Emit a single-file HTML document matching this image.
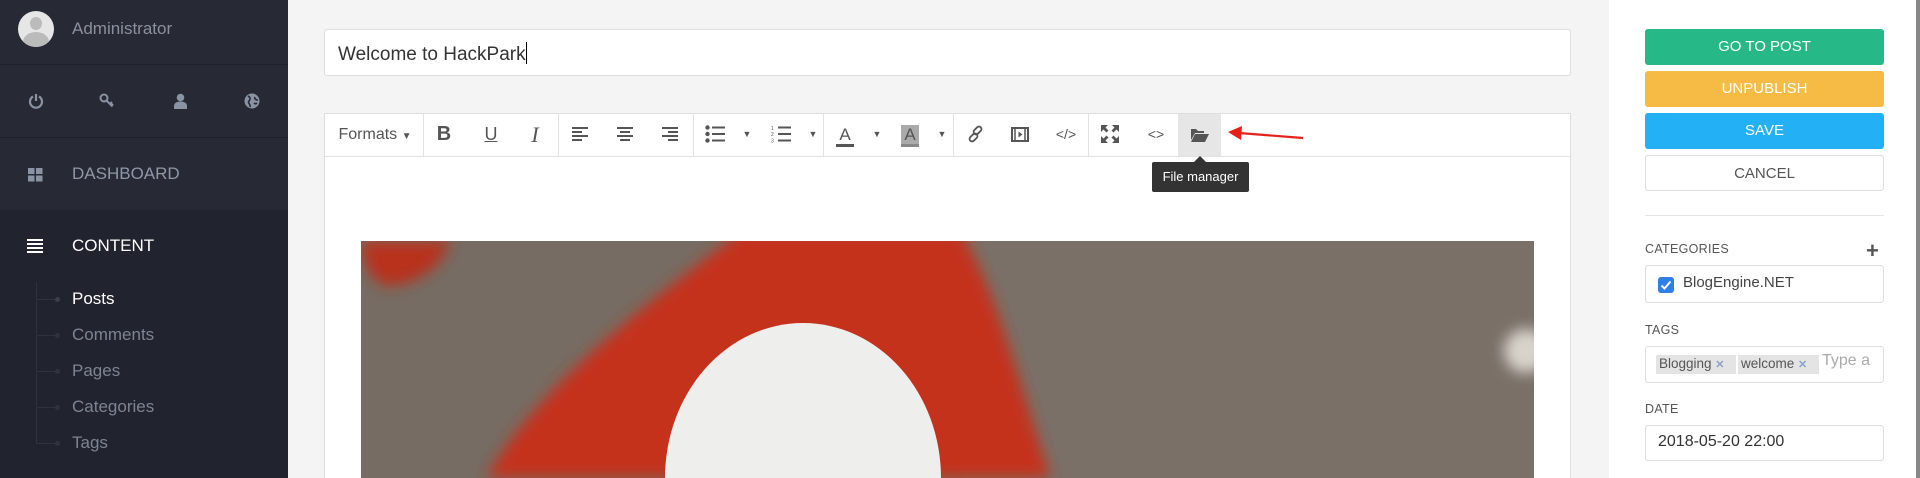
<!DOCTYPE html>
<html><head><meta charset="utf-8"><style>
*{margin:0;padding:0;box-sizing:border-box}
html,body{width:1920px;height:478px;overflow:hidden}
body{background:#f4f4f4;font-family:"Liberation Sans",sans-serif;position:relative}
.abs{position:absolute}
#side{left:0;top:0;width:288px;height:478px;background:#272a35}
#side .dark{position:absolute;left:0;top:210px;width:288px;height:268px;background:#21242e}
.t{position:absolute;white-space:nowrap}
.btn{position:absolute;left:1645px;width:239px;height:36px;border-radius:3px;color:#fff;font-size:15px;text-align:center;line-height:36px}
.lbl{position:absolute;left:1645px;font-size:12.5px;color:#555;letter-spacing:.3px}
.box{position:absolute;left:1645px;width:239px;border:1px solid #ddd;border-radius:3px;background:#fff}
.tb{position:absolute;top:113px;height:43px;color:#555;font-size:17px;text-align:center;line-height:43px}
.sep{position:absolute;top:114px;width:1px;height:42px;background:#e2e2e2}
</style></head><body>
<div id="side" class="abs">
 <div class="dark"></div>
 <div class="abs" style="left:18px;top:11px;width:36px;height:36px;border-radius:50%;background:#e6e6e6;overflow:hidden">
  <div class="abs" style="left:12px;top:6px;width:12px;height:13px;border-radius:50%;background:#bbb"></div>
  <div class="abs" style="left:5px;top:21px;width:26px;height:20px;border-radius:50% 50% 0 0;background:#bbb"></div>
 </div>
 <div class="t" style="left:72px;top:19px;font-size:17px;color:#8a909c">Administrator</div>
 <div class="abs" style="left:0;top:64px;width:288px;height:1px;background:#1f2129"></div>
 <svg class="abs" style="left:28px;top:93px" width="16" height="16" viewBox="0 0 16 16"><path d="M5 3.5A6 6 0 1 0 11 3.5" fill="none" stroke="#8a93a3" stroke-width="2.2"/><path d="M8 1v7" stroke="#8a93a3" stroke-width="2.2"/></svg>
 <svg class="abs" style="left:99px;top:93px" width="16" height="16" viewBox="0 0 16 16"><circle cx="5" cy="5" r="3.5" fill="none" stroke="#8a93a3" stroke-width="2"/><path d="M7.5 7.5l6 6M11 11l2-2M12.5 12.5l1.5-1.5" stroke="#8a93a3" stroke-width="2"/></svg>
 <svg class="abs" style="left:173px;top:93px" width="15" height="16" viewBox="0 0 15 16"><circle cx="7.5" cy="4.5" r="3.8" fill="#8a93a3"/><path d="M1 16v-3c0-3 3-4.5 6.5-4.5S14 10 14 13v3z" fill="#8a93a3"/></svg>
 <svg class="abs" style="left:244px;top:93px" width="16" height="16" viewBox="0 0 16 16"><circle cx="8" cy="8" r="7.5" fill="#8a93a3"/><path d="M4 3c2 1 3 3 1 5s2 3 1 6M11 4c-1 2 1 3 3 3M10 10c1 1 2 1 3 0" stroke="#272a35" stroke-width="1.6" fill="none"/></svg>
 <div class="abs" style="left:0;top:137px;width:288px;height:1px;background:#1f2129"></div>
 <svg class="abs" style="left:28px;top:168px" width="15" height="14"><rect x="0" y="0" width="6.5" height="6" fill="#8a93a3"/><rect x="8" y="0" width="6.5" height="6" fill="#8a93a3"/><rect x="0" y="7.5" width="6.5" height="6" fill="#8a93a3"/><rect x="8" y="7.5" width="6.5" height="6" fill="#8a93a3"/></svg>
 <div class="t" style="left:72px;top:164px;font-size:17px;color:#8f97a6">DASHBOARD</div>
 <svg class="abs" style="left:27px;top:239px" width="16" height="14"><rect y="0" width="16" height="2" fill="#fff"/><rect y="4" width="16" height="2" fill="#fff"/><rect y="8" width="16" height="2" fill="#fff"/><rect y="12" width="16" height="2" fill="#fff"/></svg>
 <div class="t" style="left:72px;top:236px;font-size:17px;color:#fff">CONTENT</div>
 <div class="abs" style="left:36px;top:282px;width:1px;height:162px;background:#2e323d"></div>
 <div class="t" style="left:72px;top:289px;font-size:17px;color:#fff">Posts</div>
 <div class="t" style="left:72px;top:325px;font-size:17px;color:#7d8491">Comments</div>
 <div class="t" style="left:72px;top:361px;font-size:17px;color:#7d8491">Pages</div>
 <div class="t" style="left:72px;top:397px;font-size:17px;color:#7d8491">Categories</div>
 <div class="t" style="left:72px;top:433px;font-size:17px;color:#7d8491">Tags</div>
 <div class="abs" style="left:36px;top:299px;width:20px;height:1px;background:#2e323d"></div><div class="abs" style="left:55px;top:297px;width:5px;height:5px;border-radius:50%;background:#3a3f4b"></div>
 <div class="abs" style="left:36px;top:335px;width:20px;height:1px;background:#2e323d"></div><div class="abs" style="left:55px;top:333px;width:5px;height:5px;border-radius:50%;background:#2f333e"></div>
 <div class="abs" style="left:36px;top:371px;width:20px;height:1px;background:#2e323d"></div><div class="abs" style="left:55px;top:369px;width:5px;height:5px;border-radius:50%;background:#2f333e"></div>
 <div class="abs" style="left:36px;top:407px;width:20px;height:1px;background:#2e323d"></div><div class="abs" style="left:55px;top:405px;width:5px;height:5px;border-radius:50%;background:#2f333e"></div>
 <div class="abs" style="left:36px;top:443px;width:20px;height:1px;background:#2e323d"></div><div class="abs" style="left:55px;top:441px;width:5px;height:5px;border-radius:50%;background:#2f333e"></div>
</div>

<div class="abs" style="left:324px;top:29px;width:1247px;height:47px;background:#fff;border:1px solid #ddd;border-radius:3px"></div>
<div class="t" style="left:338px;top:42px;font-size:19px;color:#333">Welcome to HackPark<span style="display:inline-block;width:1px;height:22px;background:#000;vertical-align:-4px"></span></div>

<div class="abs" style="left:324px;top:113px;width:1247px;height:365px;background:#fff;border:1px solid #ddd;border-bottom:none"></div>
<div class="abs" style="left:325px;top:156px;width:1245px;height:1px;background:#e2e2e2"></div>
<div class="tb" style="left:337px;width:76px;font-size:16px">Formats <span style="font-size:10px">▼</span></div>
<div class="sep" style="left:423px"></div><div class="sep" style="left:558px"></div><div class="sep" style="left:693px"></div><div class="sep" style="left:823px"></div><div class="sep" style="left:953px"></div><div class="sep" style="left:1088px"></div>
<div class="tb" style="left:434px;width:20px;font-weight:bold;font-size:20px">B</div>
<div class="tb" style="left:481px;width:20px;text-decoration:underline;font-size:18px">U</div>
<div class="tb" style="left:525px;width:20px;font-style:italic;font-family:'Liberation Serif',serif;font-size:22px">I</div>
<svg class="abs" style="left:572px;top:127px" width="16" height="15"><g fill="#555"><rect y="0" width="16" height="2"/><rect y="4" width="10" height="2"/><rect y="8" width="16" height="2"/><rect y="12" width="10" height="2"/></g></svg>
<svg class="abs" style="left:617px;top:127px" width="16" height="15"><g fill="#555"><rect y="0" width="16" height="2"/><rect x="3" y="4" width="10" height="2"/><rect y="8" width="16" height="2"/><rect x="3" y="12" width="10" height="2"/></g></svg>
<svg class="abs" style="left:662px;top:127px" width="16" height="15"><g fill="#555"><rect y="0" width="16" height="2"/><rect x="6" y="4" width="10" height="2"/><rect y="8" width="16" height="2"/><rect x="6" y="12" width="10" height="2"/></g></svg>
<svg class="abs" style="left:705px;top:125px" width="20" height="18"><g fill="#555"><circle cx="2.5" cy="2.5" r="2.2"/><circle cx="2.5" cy="9" r="2.2"/><circle cx="2.5" cy="15.5" r="2.2"/><rect x="7" y="1.5" width="13" height="2"/><rect x="7" y="8" width="13" height="2"/><rect x="7" y="14.5" width="13" height="2"/></g></svg>
<div class="tb" style="left:741px;width:12px;font-size:9px">▼</div>
<svg class="abs" style="left:771px;top:125px" width="20" height="18"><g fill="#555"><rect x="7" y="1.5" width="13" height="2"/><rect x="7" y="8" width="13" height="2"/><rect x="7" y="14.5" width="13" height="2"/></g><text x="0" y="5" font-size="5" fill="#555" font-family="Liberation Sans">1</text><text x="0" y="11" font-size="5" fill="#555" font-family="Liberation Sans">2</text><text x="0" y="17.5" font-size="5" fill="#555" font-family="Liberation Sans">3</text></svg>
<div class="tb" style="left:807px;width:12px;font-size:9px">▼</div>
<div class="tb" style="left:836px;width:18px;font-size:17px">A</div><div class="abs" style="left:836px;top:144px;width:18px;height:3px;background:#555"></div>
<div class="tb" style="left:871px;width:12px;font-size:9px">▼</div>
<div class="abs" style="left:901px;top:125px;width:18px;height:22px;background:#aaa"></div>
<div class="tb" style="left:901px;width:18px;font-size:17px">A</div><div class="abs" style="left:901px;top:144px;width:18px;height:3px;background:#888"></div>
<div class="tb" style="left:936px;width:12px;font-size:9px">▼</div>
<svg class="abs" style="left:967px;top:125px" width="18" height="18" viewBox="0 0 18 18"><g fill="none" stroke="#555" stroke-width="1.8"><rect x="8" y="1" width="5" height="9" rx="2.5" transform="rotate(45 10.5 5.5)"/><rect x="4" y="8" width="5" height="9" rx="2.5" transform="rotate(45 6.5 12.5)"/></g></svg>
<svg class="abs" style="left:1011px;top:127px" width="18" height="15"><rect x="1" y="1" width="16" height="13" fill="none" stroke="#555" stroke-width="2"/><path d="M4 1v13M14 1v13" stroke="#555" stroke-width="1.5"/><path d="M7.5 4.5l4 3-4 3z" fill="#555"/></svg>
<div class="tb" style="left:1054px;width:24px;font-size:14px">&lt;/&gt;</div>
<svg class="abs" style="left:1101px;top:125px" width="18" height="18" viewBox="0 0 18 18"><g fill="#555"><path d="M0 0h7l-2.5 2.5 3 3-2 2-3-3L0 7z"/><path d="M18 0v7l-2.5-2.5-3 3-2-2 3-3L11 0z"/><path d="M0 18v-7l2.5 2.5 3-3 2 2-3 3L7 18z"/><path d="M18 18h-7l2.5-2.5-3-3 2-2 3 3L18 11z"/></g></svg>
<div class="tb" style="left:1146px;width:20px;font-size:14px">&lt;&gt;</div>
<div class="abs" style="left:1178px;top:114px;width:43px;height:42px;background:#e6e6e6"></div>
<svg class="abs" style="left:1191px;top:128px" width="18" height="14" viewBox="0 0 18 14"><path d="M0 1h5l2 2h6v2H4L0 12z" fill="#555"/><path d="M4 6h14l-4 8H0z" fill="#555"/></svg>
<div class="abs" style="left:1152px;top:162px;width:97px;height:30px;background:#333;border-radius:2px;color:#fff;font-size:13px;text-align:center;line-height:30px">File manager</div>
<div class="abs" style="left:1194px;top:156px;width:0;height:0;border-left:6px solid transparent;border-right:6px solid transparent;border-bottom:6px solid #333"></div>
<svg class="abs" style="left:1225px;top:124px" width="80" height="20"><path d="M14 9L78 14" stroke="#e8201a" stroke-width="2.2"/><path d="M3 8l14-6-1 14z" fill="#e8201a"/></svg>

<svg class="abs" style="left:361px;top:241px" width="1173" height="237" viewBox="0 0 1173 237">
 <defs><filter id="b"><feGaussianBlur stdDeviation="7"/></filter></defs>
 <rect width="1173" height="237" fill="#766c63"/>
 <rect x="600" width="573" height="237" fill="#7a7068"/>
 <g filter="url(#b)">
 <path d="M380 -10C290 60 180 140 125 237H690C660 150 640 60 600 -10z" fill="#c5301e"/>
 <path d="M0 0h90c-10 30-40 45-65 45C10 40 0 20 0 0z" fill="#b8301f"/>
 <ellipse cx="1165" cy="110" rx="22" ry="22" fill="#d8d4cc"/>
 </g>
 <ellipse cx="442" cy="237" rx="138" ry="155" fill="#eeeeec"/>
</svg>

<div class="abs" style="left:1609px;top:0;width:307px;height:478px;background:#fff"></div>
<div class="abs" style="left:1916px;top:0;width:4px;height:478px;background:#888"></div>
<div class="btn" style="top:29px;background:#26b886">GO TO POST</div>
<div class="btn" style="top:71px;background:#f5bb44">UNPUBLISH</div>
<div class="btn" style="top:113px;background:#23b0f5">SAVE</div>
<div class="btn" style="top:155px;background:#fff;border:1px solid #ddd;color:#555">CANCEL</div>
<div class="abs" style="left:1645px;top:215px;width:239px;height:1px;background:#e6e6e6"></div>
<div class="lbl" style="top:242px">CATEGORIES</div>
<div class="t" style="left:1866px;top:238px;font-size:22px;font-weight:bold;color:#555">+</div>
<div class="box" style="top:265px;height:38px"></div>
<div class="abs" style="left:1658px;top:277px;width:16px;height:16px;border-radius:3px;background:#2f7fe4"></div>
<svg class="abs" style="left:1658px;top:277px" width="16" height="16"><path d="M3.5 8.5l3 3 6-7" stroke="#fff" stroke-width="2" fill="none"/></svg>
<div class="t" style="left:1683px;top:274px;font-size:15px;color:#444">BlogEngine.NET</div>
<div class="lbl" style="top:323px">TAGS</div>
<div class="box" style="top:346px;height:37px"></div>
<div class="abs" style="left:1656px;top:355px;width:80px;height:19px;background:#e4e4e4"></div>
<div class="t" style="left:1659px;top:356px;font-size:13.5px;color:#555">Blogging <span style="color:#8da2c8;font-weight:bold;font-size:11px">✕</span></div>
<div class="abs" style="left:1738px;top:355px;width:81px;height:19px;background:#e4e4e4"></div>
<div class="t" style="left:1741px;top:356px;font-size:13.5px;color:#555">welcome <span style="color:#8da2c8;font-weight:bold;font-size:11px">✕</span></div>
<div class="t" style="left:1822px;top:352px;font-size:16px;color:#aaa">Type a</div>
<div class="lbl" style="top:402px">DATE</div>
<div class="box" style="top:425px;height:36px"></div>
<div class="t" style="left:1658px;top:433px;font-size:16px;color:#333">2018-05-20 22:00</div>
</body></html>
